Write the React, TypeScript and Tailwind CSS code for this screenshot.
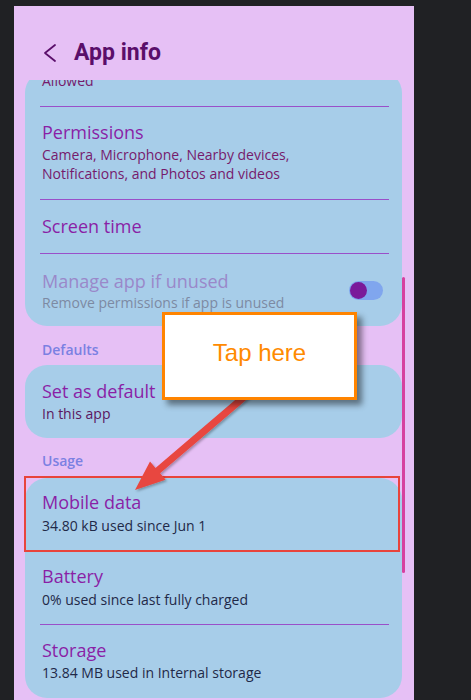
import React from 'react';

const TITLE = 'text-[18px] leading-[24px] text-[#8a1fa6]';
const SUB = 'text-[14px] leading-[19px]';

type RowProps = {
  title: string;
  sub?: string;
  subClass?: string;
  pt: string;
  pb: string;
  gap?: string;
};

const Row: React.FC<RowProps> = ({ title, sub, subClass = 'text-[#1f2948]', pt, pb, gap = 'mt-[1px]' }) => (
  <div className={`pl-[17px] pr-[19px] ${pt} ${pb}`}>
    <div className={TITLE}>{title}</div>
    {sub && <div className={`${SUB} ${gap} ${subClass}`}>{sub}</div>}
  </div>
);

const Divider: React.FC = () => <div className="ml-[15px] mr-[13px] h-px bg-[#9a4fc9]" />;

const SectionLabel: React.FC<{ label: string; mt: string; mb: string }> = ({ label, mt, mb }) => (
  <div className={`ml-[28px] ${mt} ${mb} text-[14px] leading-[19px] font-semibold text-[#7b80e2]`}>{label}</div>
);

export default function App() {
  return (
    <div
      className="relative w-full h-[700px] overflow-hidden bg-[#202124]"
      style={{ fontFamily: '"Open Sans", Roboto, sans-serif' }}
    >
      {/* phone screen */}
      <div className="ml-[14px] mt-[6px] w-[400px] h-[694px] bg-[#e6c0f5] flex flex-col overflow-hidden">
        <header className="flex items-center pl-[29px] pt-[33px] pb-[13px]">
          <svg width="14" height="20" viewBox="0 0 14 20" className="shrink-0">
            <polyline points="12,2 2,10 12,18" fill="none" stroke="#5a0e6a" strokeWidth="1.8" strokeLinecap="round" strokeLinejoin="round" />
          </svg>
          <h1
            className="ml-[17px] text-[23px] leading-[28px] font-bold text-[#5a0e6a]"
            style={{ fontFamily: 'Roboto, "Open Sans", sans-serif' }}
          >
            App info
          </h1>
        </header>

        <div className="flex-1 overflow-hidden">
          {/* card 1 */}
          <div className="mt-[5px] ml-[11px] w-[377px] bg-[#a7cde9] rounded-[22px]">
            <div className={`-mt-[14px] pl-[17px] pb-[16px] ${SUB} text-[#761a6c]`}>Allowed</div>
            <Divider />
            <Row
              title="Permissions"
              sub="Camera, Microphone, Nearby devices, Notifications, and Photos and videos"
              subClass="text-[#761a6c] w-[280px]"
              pt="pt-[13px]"
              pb="pb-[16px]"
            />
            <Divider />
            <Row title="Screen time" pt="pt-[14px]" pb="pb-[15px]" />
            <Divider />
            <div className="flex items-center pl-[17px] pr-[19px] pt-[15px] pb-[14px]">
              <div className="flex-1">
                <div className="text-[18px] leading-[24px] text-[#9a88c9]">Manage app if unused</div>
                <div className={`${SUB} text-[#7d8aa3]`}>Remove permissions if app is unused</div>
              </div>
              <div className="w-[34px] h-[19px] rounded-full bg-[#80a6ee] flex items-center pl-px">
                <div className="w-[17px] h-[17px] rounded-full bg-[#7a1a9a]" />
              </div>
            </div>
          </div>

          <SectionLabel label="Defaults" mt="mt-[14px]" mb="mb-[6px]" />

          {/* card 2 */}
          <div className="ml-[11px] w-[377px] bg-[#a7cde9] rounded-[22px]">
            <Row title="Set as default" sub="In this app" subClass="text-[#5b1660]" pt="pt-[14px]" pb="pb-[15px]" />
          </div>

          <SectionLabel label="Usage" mt="mt-[13px]" mb="mb-[8px]" />

          {/* card 3 */}
          <div className="ml-[11px] w-[377px] bg-[#a7cde9] rounded-[22px]">
            <div className="relative">
              <Row title="Mobile data" sub="34.80 kB used since Jun 1" pt="pt-[12px]" pb="pb-[16px]" gap="mt-[2px]" />
              <div className="absolute -left-px -top-[2px] right-[2px] -bottom-px border-2 border-[#e8443c]" />
            </div>
            <Row title="Battery" sub="0% used since last fully charged" pt="pt-[13px]" pb="pb-[15px]" gap="mt-[2px]" />
            <Divider />
            <Row title="Storage" sub="13.84 MB used in Internal storage" pt="pt-[13px]" pb="pb-[16px]" />
          </div>
        </div>
      </div>

      {/* scroll indicator */}
      <div className="absolute left-[402px] top-[277px] w-[3px] h-[296px] rounded-full bg-[#d6409f]" />

      {/* arrow annotation */}
      <svg className="absolute left-0 top-0 pointer-events-none" width="471" height="700" viewBox="0 0 471 700">
        <defs>
          <filter id="ash" x="-20%" y="-20%" width="140%" height="140%">
            <feDropShadow dx="1.5" dy="1.5" stdDeviation="1.2" floodColor="#000" floodOpacity="0.3" />
          </filter>
        </defs>
        <polygon
          points="247.7,389.3 155.5,467.9 150,461.5 135,490 165.6,479.7 160.1,473.3 252.3,394.7"
          fill="#e8473f"
          filter="url(#ash)"
        />
      </svg>

      {/* callout */}
      <div className="absolute left-[162px] top-[312px] w-[195px] h-[88px] bg-white border-[3px] border-[#ff8400] shadow-[5px_5px_6px_rgba(0,0,0,0.45)] flex items-center justify-center pb-[6px]">
        <span className="text-[24px] leading-[28px] text-[#ff8a00]" style={{ fontFamily: '"Liberation Sans", Arial, sans-serif' }}>
          Tap here
        </span>
      </div>
    </div>
  );
}
